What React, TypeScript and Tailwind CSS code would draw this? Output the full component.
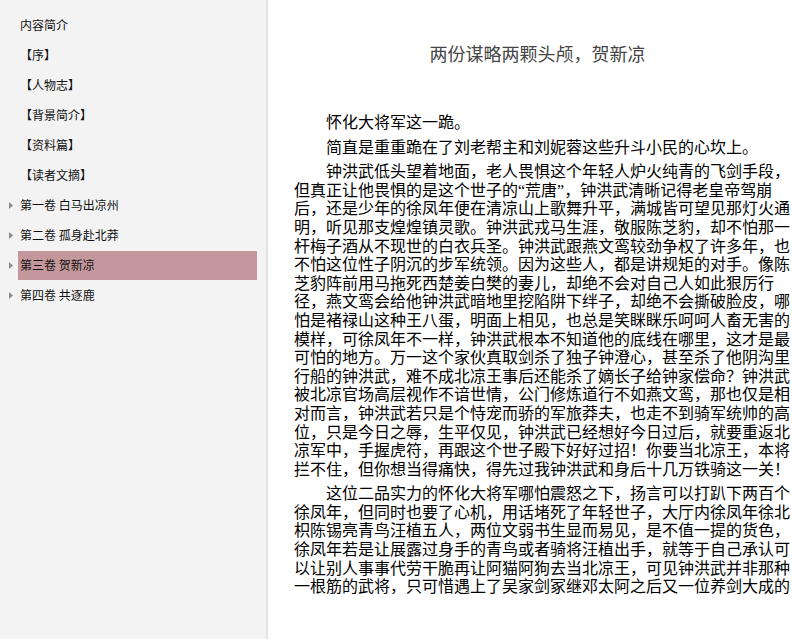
const sidebarItems: { label: string; arrow?: boolean; active?: boolean }[] = [
  { label: "内容简介" },
  { label: "【序】" },
  { label: "【人物志】" },
  { label: "【背景简介】" },
  { label: "【资料篇】" },
  { label: "【读者文摘】" },
  { label: "第一卷 白马出凉州", arrow: true },
  { label: "第二卷 孤身赴北莽", arrow: true },
  { label: "第三卷 贺新凉", arrow: true, active: true },
  { label: "第四卷 共逐鹿", arrow: true },
];

const paragraphs = [
  "怀化大将军这一跪。",
  "简直是重重跪在了刘老帮主和刘妮蓉这些升斗小民的心坎上。",
  "钟洪武低头望着地面，老人畏惧这个年轻人炉火纯青的飞剑手段，但真正让他畏惧的是这个世子的“荒唐”，钟洪武清晰记得老皇帝驾崩后，还是少年的徐凤年便在清凉山上歌舞升平，满城皆可望见那灯火通明，听见那支煌煌镇灵歌。钟洪武戎马生涯，敬服陈芝豹，却不怕那一杆梅子酒从不现世的白衣兵圣。钟洪武跟燕文鸾较劲争权了许多年，也不怕这位性子阴沉的步军统领。因为这些人，都是讲规矩的对手。像陈芝豹阵前用马拖死西楚姜白樊的妻儿，却绝不会对自己人如此狠厉行径，燕文鸾会给他钟洪武暗地里挖陷阱下绊子，却绝不会撕破脸皮，哪怕是褚禄山这种王八蛋，明面上相见，也总是笑眯眯乐呵呵人畜无害的模样，可徐凤年不一样，钟洪武根本不知道他的底线在哪里，这才是最可怕的地方。万一这个家伙真取剑杀了独子钟澄心，甚至杀了他阴沟里行船的钟洪武，难不成北凉王事后还能杀了嫡长子给钟家偿命？钟洪武被北凉官场高层视作不谙世情，公门修炼道行不如燕文鸾，那也仅是相对而言，钟洪武若只是个恃宠而骄的军旅莽夫，也走不到骑军统帅的高位，只是今日之辱，生平仅见，钟洪武已经想好今日过后，就要重返北凉军中，手握虎符，再跟这个世子殿下好好过招！你要当北凉王，本将拦不住，但你想当得痛快，得先过我钟洪武和身后十几万铁骑这一关！",
  "这位二品实力的怀化大将军哪怕震怒之下，扬言可以打趴下两百个徐凤年，但同时也要了心机，用话堵死了年轻世子，大厅内徐凤年徐北枳陈锡亮青鸟汪植五人，两位文弱书生显而易见，是不值一提的货色，徐凤年若是让展露过身手的青鸟或者骑将汪植出手，就等于自己承认可以让别人事事代劳干脆再让阿猫阿狗去当北凉王，可见钟洪武并非那种一根筋的武将，只可惜遇上了吴家剑冢继邓太阿之后又一位养剑大成的",
];

function Arrow() {
  return (
    <svg width="4" height="7" viewBox="0 0 4 7" className="ml-[9px]">
      <path d="M0 0 L4 3.5 L0 7 Z" fill="#8c8c8c" />
    </svg>
  );
}

export default function App() {
  return (
    <div className="flex h-[639px] w-full overflow-hidden bg-white">
      <aside className="w-[268px] shrink-0 border-r-2 border-[#e4e4e4] bg-[#f3f3f3] pt-[10px] font-['Noto_Sans_CJK_SC',sans-serif] text-[12px] text-[#111]">
        {sidebarItems.map((item) => (
          <div key={item.label} className="flex h-[30px] items-center">
            <div className="flex w-[18px] shrink-0 items-center">{item.arrow && <Arrow />}</div>
            <div
              className={`mr-[9px] flex h-[29px] flex-1 items-center pl-[2px] ${
                item.active ? "bg-[#c4979c]" : ""
              }`}
            >
              {item.label}
            </div>
          </div>
        ))}
      </aside>

      <main className="flex-1 overflow-hidden pt-[43px]">
        <div className="ml-[26px] w-[497px] font-['Liberation_Serif','Noto_Sans_CJK_SC',serif]">
          <h1 className="pr-[10px] text-center text-[18px] leading-[24px] text-[#454545]">
            两份谋略两颗头颅，贺新凉
          </h1>
          <div className="mt-[47px] text-[16px] leading-[18.6px] text-black">
            {paragraphs.map((p, i) => (
              <p key={i} className="mb-[6px] indent-[2em]">
                {p}
              </p>
            ))}
          </div>
        </div>
      </main>
    </div>
  );
}
